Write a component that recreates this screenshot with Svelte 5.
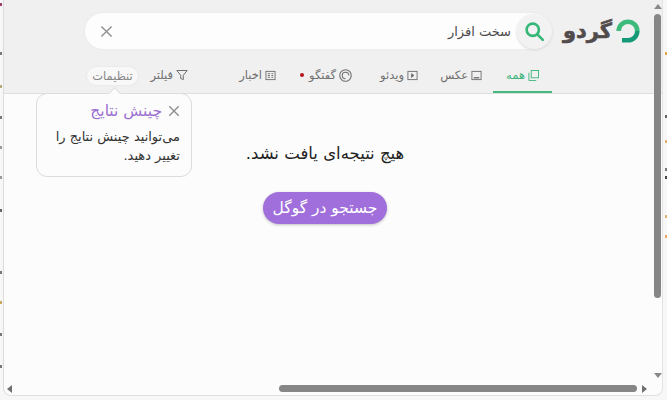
<script>
  const tabs = [
    { label: 'همه', icon: 'all', w: 59, active: true },
    { label: 'عکس', icon: 'image', w: 64 },
    { label: 'ویدئو', icon: 'video', w: 66 },
    { label: 'گفتگو', icon: 'chat', w: 76 },
    { label: 'اخبار', icon: 'news', w: 88 }
  ];
  const leftSpecks = [
    { y: 3, c: '#a0406a' }, { y: 52, c: '#777' }, { y: 85, c: '#b9a87a' }, { y: 116, c: '#777' },
    { y: 146, c: '#999' }, { y: 176, c: '#999' }, { y: 209, c: '#666' }, { y: 271, c: '#777' },
    { y: 301, c: '#c9a860' }, { y: 333, c: '#777' }, { y: 365, c: '#777' }
  ];
  const rightSpecks = [
    { y: 52, c: '#e8a850' }, { y: 115, c: '#666' }, { y: 140, c: '#e8b070' }, { y: 168, c: '#777' },
    { y: 176, c: '#444' }, { y: 215, c: '#e8b070' }, { y: 235, c: '#e8a860' }
  ];
</script>

<div class="screen">
  <div class="strip">
    {#each leftSpecks as s}<i style="top:{s.y}px;background:{s.c}"></i>{/each}
  </div>
  <div class="window" dir="rtl">
    <header class="head">
      <div class="top">
        <div class="logo">
          <svg class="mark" viewBox="0 0 24 24" width="24" height="24" aria-hidden="true">
            <path d="M2.700 12A9.300 9.300 0 0 1 21.300 12" fill="none" stroke="#3dbb7c" stroke-width="4.600" />
            <path d="M21.300 12A9.300 9.300 0 0 1 12 21.300H6" fill="none" stroke="#159a78" stroke-width="4.600" />
          </svg>
          <span class="word">گردو</span>
        </div>
        <div class="search">
          <button class="go" aria-label="جستجو">
            <svg viewBox="0 0 24 24" width="21" height="21" fill="none" stroke="#35b778" stroke-width="3" stroke-linecap="round">
              <circle cx="10" cy="10" r="7" />
              <path d="M15.500 15.500 21.500 21.500" />
            </svg>
          </button>
          <span class="query">سخت افزار</span>
          <svg class="clear" viewBox="0 0 14 14" width="13" height="13" fill="none" stroke="#8f8f8f" stroke-width="1.500">
            <path d="M1.500 1.500 12.500 12.500M12.500 1.500 1.500 12.500" />
          </svg>
        </div>
      </div>
      <nav class="tabs">
        {#each tabs as t}
          <div class="tab" class:active={t.active} style="width:{t.w}px">
            <svg viewBox="0 0 12 12" width={t.icon === 'chat' ? 13 : 11} height={t.icon === 'chat' ? 13 : 11} fill="none" stroke="currentColor" stroke-width="1">
              {#if t.icon === 'all'}
                <rect x="3.500" y="0.500" width="8" height="8" />
                <path d="M1 3v8.500h8" />
              {:else if t.icon === 'image'}
                <rect x="1" y="1.500" width="10" height="9" />
                <path d="M3 8.500h6" stroke-width="1.500" />
              {:else if t.icon === 'video'}
                <rect x="1" y="1.500" width="10" height="9" />
                <path d="M5 4v4l2.500-2z" fill="currentColor" />
              {:else if t.icon === 'chat'}
                <circle cx="6" cy="6" r="5.300" />
                <path d="M9 6a3 3 0 1 0-3 3" />
              {:else}
                <rect x="1" y="1.500" width="10" height="9" />
                <path d="M3 4h2.500M3 6h2.500M3 8h2.500M7 4h2M7 6h2M7 8h2" />
              {/if}
            </svg>
            <span>{t.label}</span>
            {#if t.icon === 'chat'}<i class="dot"></i>{/if}
          </div>
        {/each}
        <div class="tab filter">
          <svg viewBox="0 0 12 12" width="12" height="12" fill="none" stroke="currentColor" stroke-width="1">
            <path d="M.800 1.500h10.400L7.300 6.300v4.200l-2.600-1V6.300z" />
          </svg>
          <span>فیلتر</span>
        </div>
        <div class="settings">تنظیمات</div>
      </nav>
    </header>

    <main class="body">
      <p class="empty">هیچ نتیجه‌ای یافت نشد.</p>
      <button class="google">جستجو در گوگل</button>
    </main>

    <aside class="pop">
      <div class="pop-title">
        <svg viewBox="0 0 14 14" width="12" height="12" fill="none" stroke="#8f8f8f" stroke-width="1.600">
          <path d="M1.500 1.500 12.500 12.500M12.500 1.500 1.500 12.500" />
        </svg>
        <span>چینش نتایج</span>
      </div>
      <p>می‌توانید چینش نتایج را<br />تغییر دهید.</p>
    </aside>

    <div class="vbar">
      <i class="arrow up"></i>
      <i class="thumb"></i>
      <i class="arrow down"></i>
    </div>
    <div class="hbar">
      <i class="arrow left"></i>
      <i class="hthumb"></i>
      <i class="arrow right"></i>
    </div>
  </div>
  <div class="strip end">
    {#each rightSpecks as s}<i style="top:{s.y}px;background:{s.c}"></i>{/each}
  </div>
</div>

<style>
  :global(body) {
    margin: 0;
    background: #f7f7f7;
  }
  .screen {
    width: 667px;
    height: 400px;
    padding-bottom: 4px;
    box-sizing: border-box;
    overflow: hidden;
    font-family: "DejaVu Sans", sans-serif;
    display: flex;
  }
  .strip {
    position: relative;
    width: 3px;
    flex: none;
  }
  .strip.end {
    width: 4px;
  }
  .strip i {
    position: absolute;
    left: 0;
    width: 2px;
    height: 3px;
  }
  .strip.end i {
    left: auto;
    right: 0;
  }
  .window {
    position: relative;
    flex: 1;
    height: 100%;
    background: #fcfcfc;
    border-right: 1px solid #e4e4e4;
    border-bottom: 1px solid #e0e0e0;
    border-left: 1px solid #dcdcdc;
    border-radius: 0 0 8px 8px;
    box-sizing: border-box;
    overflow: hidden;
    display: flex;
    flex-direction: column;
  }
  .head {
    height: 94px;
    flex: none;
    box-sizing: border-box;
    background: #f0f0f0;
    border-bottom: 1px solid #dedede;
    padding-left: 81px;
    padding-right: 22px;
  }
  .top {
    display: flex;
    align-items: center;
    height: 62px;
  }
  .logo {
    width: 77px;
    margin-left: 11px;
    display: flex;
    align-items: center;
    gap: 4px;
    flex: none;
  }
  .mark {
    flex: none;
  }
  .word {
    font-size: 21px;
    line-height: 30px;
    font-weight: 700;
    color: #514b4c;
    -webkit-text-stroke: 0.6px #514b4c;
    white-space: nowrap;
  }
  .search {
    flex: 1;
    height: 36px;
    border-radius: 18px;
    background: #fdfdfd;
    display: flex;
    align-items: center;
    box-shadow: 0 0 2px #e2e2e2;
  }
  .go {
    width: 35px;
    height: 35px;
    border: 0;
    border-radius: 50%;
    padding: 0;
    display: flex;
    align-items: center;
    justify-content: center;
    background: #f2f2f2;
    box-shadow: 0 1px 3px #d8d8d8;
    flex: none;
  }
  .query {
    flex: 1;
    font-size: 13px;
    color: #4a4a4a;
    margin-right: 6px;
  }
  .clear {
    margin-left: 15px;
  }
  .tabs {
    display: flex;
    align-items: stretch;
    height: 31px;
    margin-right: 88px;
    font-size: 11.500px;
    color: #6f6f6f;
  }
  .tab {
    display: flex;
    align-items: center;
    gap: 3px;
    box-sizing: border-box;
    padding-bottom: 5px;
    flex: none;
  }
  .tab.active {
    color: #3fb67c;
    justify-content: center;
    border-bottom: 2px solid #46b980;
    margin-left: 11px;
    padding-bottom: 3px;
  }
  .dot {
    width: 4px;
    height: 4px;
    border-radius: 50%;
    background: #b5121b;
    margin-right: 2px;
  }
  .filter {
    width: 50px;
  }
  .settings {
    align-self: center;
    margin-bottom: 4px;
    width: 51px;
    text-align: center;
    height: 18px;
    line-height: 18px;
    border-radius: 9px;
    background: #f8f8f8;
    color: #858585;
    box-shadow: 0 0 2px #dddddd;
    white-space: nowrap;
    flex: none;
  }
  .body {
    flex: 1;
    display: flex;
    flex-direction: column;
    align-items: center;
    padding-right: 16px;
  }
  .empty {
    margin: 50px 0 0;
    font-size: 16.500px;
    line-height: 20px;
    color: #222;
  }
  .google {
    margin-top: 28px;
    width: 124px;
    height: 32px;
    border: 0;
    border-radius: 16px;
    background: #a16fdc;
    color: #fff;
    font: 15.500px "DejaVu Sans", sans-serif;
    box-shadow: 0 1px 3px #c0c0c0;
    padding: 0;
    white-space: nowrap;
  }
  .pop {
    position: absolute;
    left: 32px;
    top: 93px;
    width: 156px;
    height: 84px;
    box-sizing: border-box;
    padding: 7px 11px 0 6px;
    background: #fcfcfc;
    border: 1px solid #dcdcdc;
    border-radius: 11px;
  }
  .pop::before {
    content: "";
    position: absolute;
    top: -5px;
    left: 73px;
    width: 8px;
    height: 8px;
    background: #fcfcfc;
    transform: rotate(45deg);
    border-left: 1px solid #dcdcdc;
    border-top: 1px solid #dcdcdc;
  }
  .pop-title {
    display: flex;
    align-items: center;
    gap: 6px;
    color: #9a6fd0;
    font-size: 15.500px;
    line-height: 20px;
    white-space: nowrap;
  }
  .pop p {
    margin: 6px 0 0;
    font-size: 13px;
    line-height: 19px;
    color: #333;
    white-space: nowrap;
  }
  .vbar {
    position: absolute;
    top: 0;
    bottom: 0;
    left: 650px;
    width: 8px;
  }
  .thumb {
    position: absolute;
    top: 14px;
    height: 284px;
    left: 0;
    width: 7px;
    border-radius: 4px;
    background: #868686;
  }
  .hbar {
    position: absolute;
    left: 0;
    right: 0;
    top: 385px;
    height: 8px;
  }
  .hthumb {
    position: absolute;
    left: 275px;
    top: 0;
    width: 358px;
    height: 7px;
    border-radius: 4px;
    background: #868686;
  }
  .arrow {
    position: absolute;
    width: 0;
    height: 0;
    border: 4px solid transparent;
  }
  .up {
    top: 4px;
    left: 0;
    border-top: 0;
    border-bottom: 5px solid #8a8a8a;
  }
  .down {
    top: 373px;
    left: 0;
    border-bottom: 0;
    border-top: 5px solid #8a8a8a;
  }
  .left {
    left: 3px;
    top: 0;
    border-left: 0;
    border-right: 5px solid #707070;
  }
  .right {
    left: 638px;
    top: 0;
    border-right: 0;
    border-left: 5px solid #707070;
  }
</style>
